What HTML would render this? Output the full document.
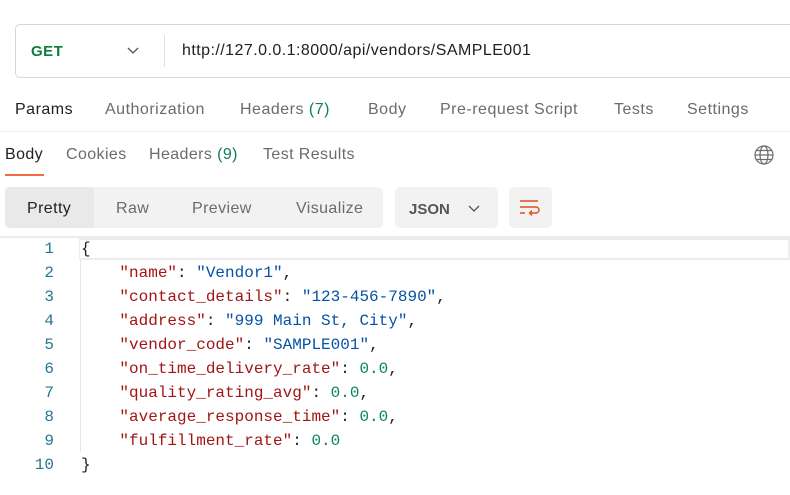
<!DOCTYPE html>
<html><head><style>
*{margin:0;padding:0;box-sizing:border-box}
body{width:790px;height:495px;background:#fff;font-family:"Liberation Sans",sans-serif;position:relative;overflow:hidden;color:#212121}
.abs{position:absolute;white-space:nowrap}
.url{left:15px;top:24px;width:790px;height:54px;border:1px solid #d6d6d6;border-radius:5px}
.tab{font-size:16px;color:#6b6b6b;top:101px;letter-spacing:0.5px}
.tab2{font-size:16px;color:#6b6b6b;top:146px;letter-spacing:0.4px}
.g{color:#0f7b5f}
.code{font-family:"Liberation Mono",monospace;font-size:16px;line-height:24px}
.k{color:#a31515}.s{color:#0451a5}.n{color:#098658}
</style></head><body>
<div class="abs url"></div>
<div class="abs" style="left:31px;top:43px;font-size:15px;font-weight:bold;color:#0b7d3e;letter-spacing:0.5px">GET</div>
<svg class="abs" style="left:127px;top:47px" width="12" height="8"><path d="M1 1l5 5 5-5" stroke="#555" stroke-width="1.3" fill="none"/></svg>
<div class="abs" style="left:164px;top:35px;width:1px;height:32px;background:#e0e0e0"></div>
<div class="abs" style="left:182px;top:42px;font-size:16px;color:#212121;letter-spacing:0.45px">http://127.0.0.1:8000/api/vendors/SAMPLE001</div>

<div class="abs tab" style="left:15px;color:#212121">Params</div>
<div class="abs tab" style="left:105px">Authorization</div>
<div class="abs tab" style="left:240px">Headers <span class="g">(7)</span></div>
<div class="abs tab" style="left:368px">Body</div>
<div class="abs tab" style="left:440px">Pre-request Script</div>
<div class="abs tab" style="left:614px">Tests</div>
<div class="abs tab" style="left:687px">Settings</div>
<div class="abs" style="left:0;top:131px;width:790px;height:1px;background:#ececec"></div>

<div class="abs tab2" style="left:5px;color:#212121">Body</div>
<div class="abs" style="left:5px;top:174px;width:39px;height:2px;background:#f26b3a"></div>
<div class="abs tab2" style="left:66px">Cookies</div>
<div class="abs tab2" style="left:149px">Headers <span class="g">(9)</span></div>
<div class="abs tab2" style="left:263px">Test Results</div>
<svg class="abs" style="left:754px;top:145px" width="20" height="20" fill="none" stroke="#6b6b6b" stroke-width="1.2"><circle cx="10" cy="10" r="9"/><ellipse cx="10" cy="10" rx="4" ry="9"/><path d="M1 10h18M2.5 5.5h15M2.5 14.5h15"/></svg>

<div class="abs" style="left:5px;top:187px;width:378px;height:41px;background:#f2f2f2;border-radius:5px"></div>
<div class="abs" style="left:5px;top:187px;width:89px;height:41px;background:#e9e9e9;border-radius:5px 0 0 5px"></div>
<div class="abs" style="left:27px;top:200px;font-size:16px;color:#212121;letter-spacing:0.4px">Pretty</div>
<div class="abs" style="left:116px;top:200px;font-size:16px;color:#6b6b6b;letter-spacing:0.4px">Raw</div>
<div class="abs" style="left:192px;top:200px;font-size:16px;color:#6b6b6b;letter-spacing:0.4px">Preview</div>
<div class="abs" style="left:296px;top:200px;font-size:16px;color:#6b6b6b;letter-spacing:0.4px">Visualize</div>
<div class="abs" style="left:395px;top:187px;width:103px;height:41px;background:#f2f2f2;border-radius:5px"></div>
<div class="abs" style="left:409px;top:201px;font-size:15px;font-weight:bold;color:#555">JSON</div>
<svg class="abs" style="left:468px;top:205px" width="12" height="8"><path d="M1 1l5 5 5-5" stroke="#555" stroke-width="1.3" fill="none"/></svg>
<div class="abs" style="left:509px;top:187px;width:43px;height:41px;background:#f2f2f2;border-radius:5px"></div>
<svg class="abs" style="left:518px;top:198px" width="24" height="20" fill="none" stroke="#e0501e" stroke-width="1.4"><path d="M2 3h18M2 9h16a3 3 0 0 1 0 6h-6M14 12.5l-2.5 2.5 2.5 2.5M2 15h5"/></svg>
<div class="abs" style="left:0;top:236px;width:790px;height:2px;background:#ececec"></div>

<div class="abs" style="left:79px;top:238px;width:711px;height:22px;border:2px solid #ededed;border-left:1px solid #ededed"></div>
<div class="abs" style="left:80px;top:260px;width:1px;height:192px;background:#e4e4e4"></div>
<div class="abs code" style="left:0;top:237px;width:54px;text-align:right;color:#237893">1<br>2<br>3<br>4<br>5<br>6<br>7<br>8<br>9<br>10</div>
<div class="abs code" style="left:81px;top:237px;color:#212121;white-space:pre">{
    <span class="k">"name"</span>: <span class="s">"Vendor1"</span>,
    <span class="k">"contact_details"</span>: <span class="s">"123-456-7890"</span>,
    <span class="k">"address"</span>: <span class="s">"999 Main St, City"</span>,
    <span class="k">"vendor_code"</span>: <span class="s">"SAMPLE001"</span>,
    <span class="k">"on_time_delivery_rate"</span>: <span class="n">0.0</span>,
    <span class="k">"quality_rating_avg"</span>: <span class="n">0.0</span>,
    <span class="k">"average_response_time"</span>: <span class="n">0.0</span>,
    <span class="k">"fulfillment_rate"</span>: <span class="n">0.0</span>
}</div>
</body></html>
